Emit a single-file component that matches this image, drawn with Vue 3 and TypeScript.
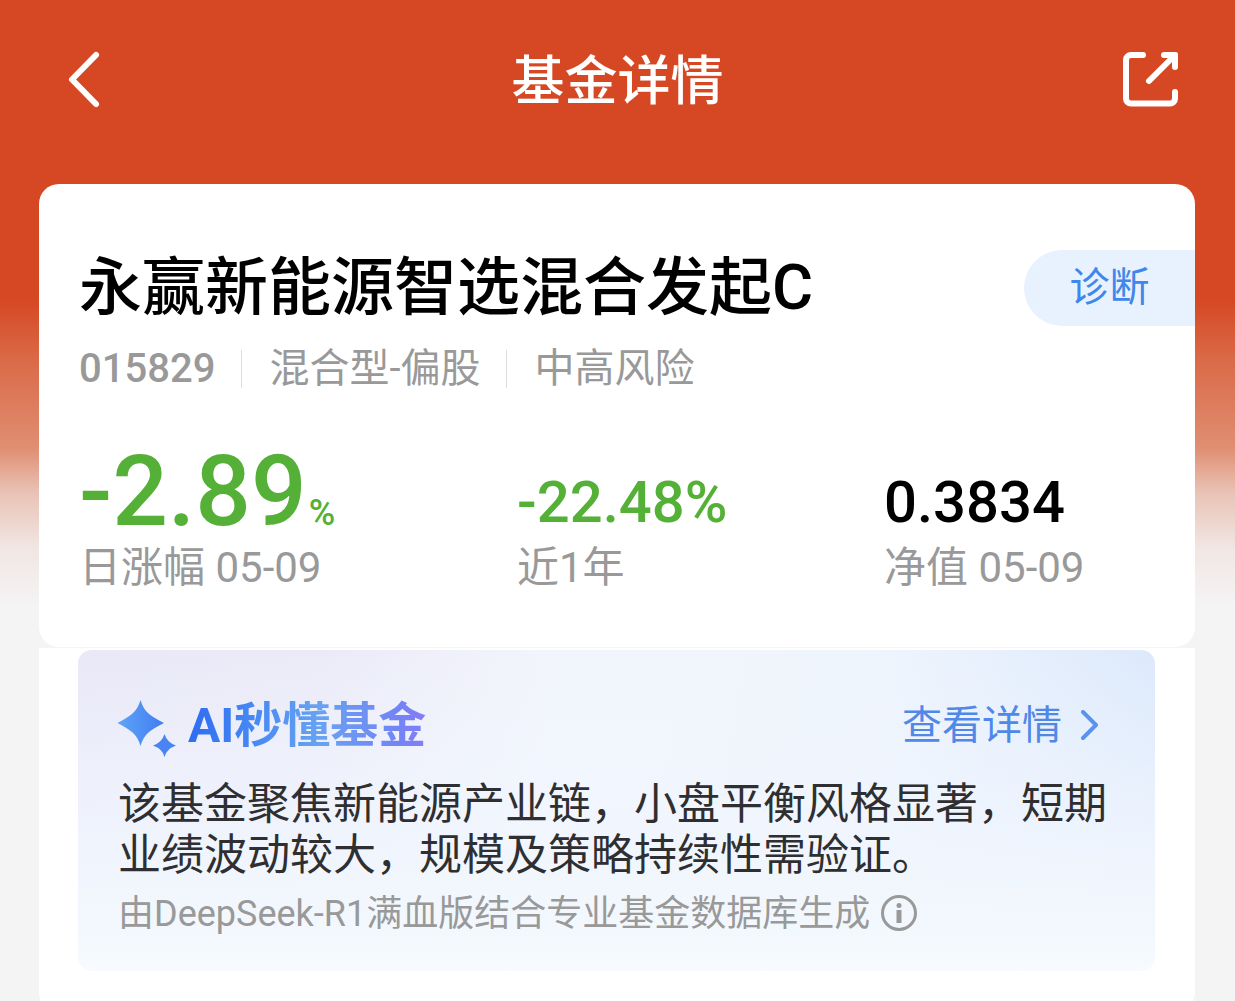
<script setup lang="ts">
interface Metric {
  value: string
  unit?: string
  label: string
  tone: 'down' | 'plain'
  large?: boolean
}

const fund = {
  name: '永赢新能源智选混合发起C',
  code: '015829',
  tags: ['混合型-偏股', '中高风险'],
}

const metrics: Metric[] = [
  { value: '-2.89', unit: '%', label: '日涨幅 05-09', tone: 'down', large: true },
  { value: '-22.48%', label: '近1年', tone: 'down' },
  { value: '0.3834', label: '净值 05-09', tone: 'plain' },
]
</script>

<template>
  <div class="page">
    <header class="bar">
      <button class="icon-button" type="button" aria-label="返回">
        <svg width="60" height="60" viewBox="0 0 60 60" fill="none" stroke="#fff" stroke-width="6" stroke-linecap="round" stroke-linejoin="round">
          <path d="M40 5 16 29.500 40 54" />
        </svg>
      </button>
      <h1 class="bar-title">基金详情</h1>
      <button class="icon-button" type="button" aria-label="分享">
        <svg width="60" height="60" viewBox="0 0 60 60" fill="none" stroke="#fff" stroke-width="6" stroke-linecap="round" stroke-linejoin="round">
          <path d="M24 5H12a5 5 0 0 0-5 5V48.500a5 5 0 0 0 5 5H51a5 5 0 0 0 5-5V42" />
          <path d="M45 5H56V17M54 7 30 31" />
          <path d="M51 5h5v5z" fill="#fff" />
        </svg>
      </button>
    </header>

    <main class="content">
      <section class="card">
        <div class="name-row">
          <h2 class="name">{{ fund.name }}</h2>
          <button class="diagnose" type="button">诊断</button>
        </div>
        <div class="meta">
          <span class="code">{{ fund.code }}</span>
          <span v-for="tag in fund.tags" :key="tag" class="tag">{{ tag }}</span>
        </div>
        <dl class="metrics">
          <div v-for="metric in metrics" :key="metric.label" class="metric">
            <dd class="value" :class="[metric.tone, { large: metric.large }]">
              {{ metric.value }}<span v-if="metric.unit" class="unit">{{ metric.unit }}</span>
            </dd>
            <dt class="label">{{ metric.label }}</dt>
          </div>
        </dl>
      </section>

      <section class="card-next">
        <article class="insight">
          <div class="insight-head">
            <svg class="spark" width="60" height="60" viewBox="0 0 60 60" aria-hidden="true">
              <defs>
                <linearGradient id="spark-fill" x1="0" y1="0" x2="1" y2="0">
                  <stop offset="0" stop-color="#5ea4f6" />
                  <stop offset="1" stop-color="#417df3" />
                </linearGradient>
              </defs>
              <path fill="url(#spark-fill)" d="M22.500 4Q25 13 31 18Q36 22 46 27Q36 32 31 36Q25 41 22.500 50Q20 41 14 36Q9 32 -.500 27Q9 22 14 18Q20 13 22.500 4Z" />
              <path fill="#4a84f4" d="M46.500 38Q48 43 51 45.500Q53 47.500 58 49.500Q53 51.500 51 53.500Q48 56 46.500 61Q45 56 42 53.500Q40 51.500 35 49.500Q40 47.500 42 45.500Q45 43 46.500 38Z" />
            </svg>
            <h3 class="insight-title">AI秒懂基金</h3>
            <a class="more" href="#detail">
              查看详情
              <svg width="20" height="32" viewBox="0 0 20 32" fill="none" stroke="#5b93ec" stroke-width="4" stroke-linecap="round" stroke-linejoin="round" aria-hidden="true">
                <path d="M3 2 16 15 3 28" />
              </svg>
            </a>
          </div>
          <p class="summary">该基金聚焦新能源产业链，小盘平衡风格显著，短期业绩波动较大，规模及策略持续性需验证。</p>
          <p class="source">
            由DeepSeek-R1满血版结合专业基金数据库生成
            <svg width="38" height="38" viewBox="0 0 38 38" aria-hidden="true">
              <circle cx="19" cy="18" r="16.500" fill="none" stroke="#999" stroke-width="3" />
              <circle cx="19" cy="10.500" r="2.500" fill="#999" />
              <path d="M19 15V28" stroke="#999" stroke-width="5" />
            </svg>
          </p>
        </article>
      </section>
    </main>
  </div>
</template>

<style>
body {
  margin: 0;
  background: #f4f4f4;
}

::-webkit-scrollbar {
  display: none;
}
</style>

<style scoped>
.page {
  box-sizing: border-box;
  min-height: 100vh;
  padding-top: 36px;
  font-family: Roboto, "Noto Sans CJK SC", sans-serif;
  background: linear-gradient(#d64824 0, #d64824 300px, #da6a48 360px, #e08e72 448px, #e9c2b5 492px, #f1e6e3 548px, #f4f4f4 606px);
}

h1,
h2,
h3,
p,
dl,
dd {
  margin: 0;
}

button {
  padding: 0;
  border: 0;
  background: none;
  font-family: inherit;
}

.bar {
  display: flex;
  align-items: center;
  justify-content: space-between;
  height: 88px;
  padding: 0 56px;
}

.icon-button {
  height: 60px;
}

.icon-button svg,
.more svg,
.source svg {
  display: block;
}

.bar-title {
  padding-top: 4px;
  color: #fff;
  font-size: 53px;
  font-weight: 500;
  line-height: 84px;
}

.content {
  padding: 60px 40px 0 39px;
}

.card {
  margin-bottom: 1px;
  padding: 66px 0 51px 40px;
  border-radius: 20px;
  background: #fff;
}

.name-row {
  display: flex;
  align-items: center;
  justify-content: space-between;
}

.name {
  color: #000;
  font-size: 63px;
  font-weight: 500;
  line-height: 76px;
}

.diagnose {
  width: 171px;
  height: 76px;
  border-radius: 38px 0 0 38px;
  background: #e7f2fe;
  color: #3f87ea;
  font-size: 40px;
  line-height: 76px;
}

.meta {
  display: flex;
  align-items: center;
  margin-top: 24px;
  color: #999;
  font-size: 40px;
  line-height: 38px;
}

.code {
  font-weight: 500;
}

.tag {
  margin-left: 26px;
  padding-left: 27px;
  border-left: 1px solid #ddd;
}

.metrics {
  display: grid;
  grid-template-columns: 438fr 367fr 271fr;
  align-items: end;
  margin-top: 56px;
  padding-right: 40px;
}

.metric {
  display: flex;
  flex-direction: column;
}

.value {
  font-size: 58px;
  font-weight: 500;
  line-height: 76px;
  white-space: nowrap;
}

.value.large {
  font-size: 98px;
  line-height: 96px;
}

.value.down {
  color: #54b036;
}

.value.plain {
  color: #000;
}

.unit {
  margin-left: 2px;
  font-size: 36px;
  line-height: 36px;
}

.label {
  color: #999;
  font-size: 42px;
  line-height: 56px;
}

.card-next {
  padding: 2px 40px 41px 39px;
  border-radius: 0 0 20px 20px;
  background: #fff;
}

.insight {
  padding: 46px 40px 35px;
  border-radius: 14px;
  background:
    linear-gradient(rgba(246, 250, 255, 0) 0, rgba(241, 246, 254, 0.9) 65%, #f3f8fd 88%, #f7fbff 100%),
    linear-gradient(100deg, #e9e8f7 0, #ebebf8 22%, #f3f5fc 42%, #eff5fd 70%, #d9e7fb 100%);
}

.insight-head {
  display: flex;
  align-items: center;
  height: 60px;
}

.spark {
  overflow: visible;
}

.insight-title {
  margin-left: 10px;
  background: linear-gradient(90deg, #2f6cf2 0, #4486f3 25%, #68a3f1 55%, #7384f5 88%, #857df5 100%);
  background-clip: text;
  color: transparent;
  font-size: 48px;
  font-weight: 700;
  line-height: 60px;
}

.more {
  display: flex;
  align-items: center;
  gap: 18px;
  margin: 0 15px 0 auto;
  color: #5088e8;
  font-size: 40px;
  line-height: 48px;
  text-decoration: none;
}

.summary {
  margin-top: 23px;
  color: #2f2f31;
  font-size: 43px;
  line-height: 51px;
}

.source {
  display: flex;
  align-items: center;
  gap: 10px;
  margin-top: 11px;
  color: #999;
  font-size: 36px;
  line-height: 44px;
}
</style>
